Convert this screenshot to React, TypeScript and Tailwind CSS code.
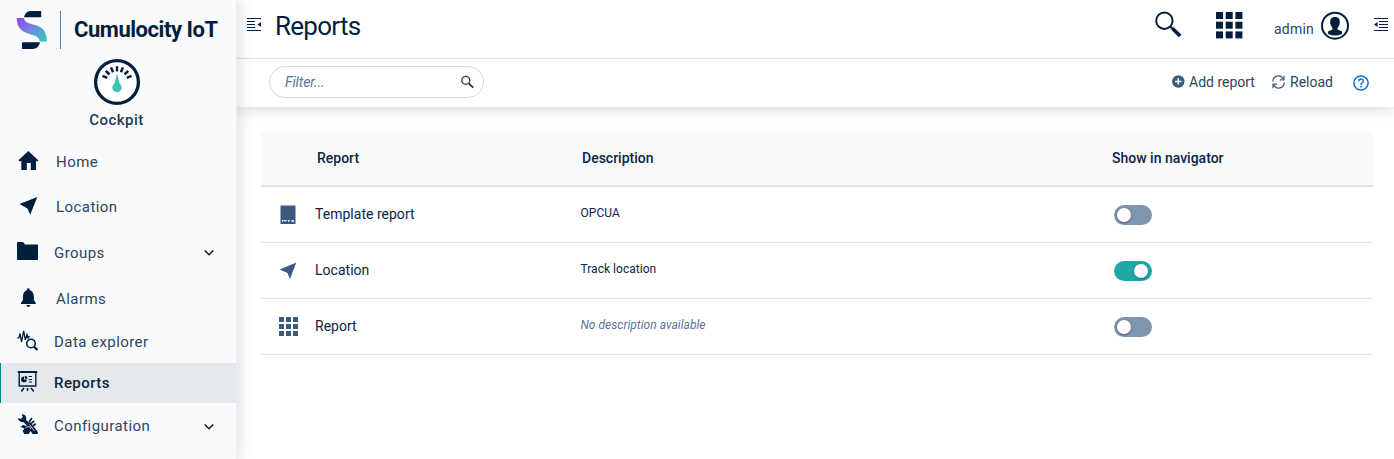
import React from "react";

type Kids = { children: React.ReactNode };

function Glyph({ w = 22, h = 22, className = "", children }: Kids & { w?: number; h?: number; className?: string }) {
  return (
    <svg width={w} height={h} viewBox={`0 0 ${w} ${h}`} fill="currentColor" className={`shrink-0 ${className}`}>
      {children}
    </svg>
  );
}

function Logo() {
  return (
    <Glyph w={32} h={40}>
      <defs>
        <linearGradient id="brand" x1="0" y1="0" x2="1" y2="1">
          <stop offset="0.1" stopColor="#8a4df5" />
          <stop offset="0.5" stopColor="#6c8be0" />
          <stop offset="0.9" stopColor="#3cc2b4" />
        </linearGradient>
      </defs>
      <path d="M8 7.2C9 3 11.500 1 15 1H25.200V7.200Z" fill="#011f3d" />
      <path d="M6 39V32.300H24C23 36.500 20.500 39 16.500 39Z" fill="#011f3d" />
      <path d="M.7 8H8C8.300 11 10 12.500 14.500 13.700L20 15.200C27 17.200 30.800 22 31 31.500H23.800C23.500 28 21 26.300 16.500 25L11.500 23.300C4 20.800 1 16 .7 8Z" fill="url(#brand)" />
    </Glyph>
  );
}

function Gauge() {
  const ticks = [-67, -45, -22, 0, 22, 45, 67];
  return (
    <Glyph w={48} h={48}>
      <circle cx="24" cy="24" r="21.400" fill="#fff" stroke="#011f3d" strokeWidth="3.300" />
      {ticks.map((a) => (
        <path key={a} d="M24 8.200V13.400" stroke="#011f3d" strokeWidth="2.500" transform={`rotate(${a} 24 24)`} />
      ))}
      <path d="M24 15.500L26.500 25.500A4.700 4.700 0 1 1 21.500 25.500Z" fill="#3cc2b4" />
    </Glyph>
  );
}

const HomeIcon = () => <Glyph><path d="M11.300 1L21.500 10.500L20.300 11.500L19 10.700V20H13.800V13H9.800V20H4.300V10.700L2.600 11.500L1.500 10.300Z" /></Glyph>;
const PointerIcon = () => <Glyph><path d="M2.500 8L20.300 1L13.200 18.800L10.500 12.500Z" /></Glyph>;
const FolderIcon = () => <Glyph><path d="M0 2Q0 1 1 1H6L8 3.500H20.200Q21 3.500 21 4.500V18.300Q21 19 20 19H1Q0 19 0 18Z" /></Glyph>;
const BellIcon = () => (
  <Glyph>
    <path d="M10 3V1.800Q11.300.700 12.600 1.800V3Q16.800 4.500 16.900 9.500V13L18.800 16V17H4V16L5.900 13V9.500Q6 4.500 10 3ZM9.200 18H13.500Q12.800 20 11.300 20Q9.800 20 9.200 18Z" />
  </Glyph>
);
const ExplorerIcon = () => (
  <Glyph className="-translate-y-px">
    <path d="M.3 7.800H1.800L3 3.500L4.500 12L6.700.8L8.300 10L10 4.500L11 8L12.500 6" fill="none" stroke="currentColor" strokeWidth="1.300" />
    <circle cx="14" cy="13.500" r="4.300" fill="none" stroke="currentColor" strokeWidth="1.600" />
    <path d="M16.800 16.500L20.500 20" stroke="currentColor" strokeWidth="2.200" />
  </Glyph>
);
const BoardIcon = () => (
  <Glyph className="-translate-y-px">
    <path d="M.8 0H20.200V2H.8Z" />
    <path d="M2.200 1.500V15H18.800V1.500" fill="none" stroke="currentColor" strokeWidth="1.400" />
    <path d="M7 5.500A2.900 2.900 0 1 0 9.900 8.400H7ZM7.800 4.800V7.700H10.500A2.900 2.900 0 0 0 7.800 4.800Z" />
    <path d="M11.700 5.500H15M11.700 8.500H15M11.700 11H15" stroke="currentColor" strokeWidth="1" />
    <path d="M7 17L4.300 20.500M10.500 17V19.800M14 17L16.700 20.500" fill="none" stroke="currentColor" strokeWidth="1.600" />
  </Glyph>
);
const ToolsIcon = () => (
  <Glyph className="-translate-y-px">
    <path d="M4.500.300Q8-.2 9.200 3V6L12.300 9L9.800 11.500L6.700 8.300Q2.500 8.700.6 4.200L4 4.800L5.800 2.800Z" />
    <path d="M12 8L15 4M14 9.700L17.300 6.800M16 11.800L18.800 9.700" fill="none" stroke="currentColor" strokeWidth="1.700" />
    <path d="M10.500 10L13 8L18.200 14.500L20.800 18V20H15.500L13.800 17L11.500 20H7.500L5.500 17L7.500 14.500L3.500 13L6 11L9.500 12Z" />
    <path d="M8.500 13.300L12.500 12.500L14 15M12.500 10.500L17.500 17" fill="none" stroke="#f9fafc" strokeWidth=".8" />
  </Glyph>
);

function Chevron() {
  return (
    <Glyph w={12} h={8} className="ml-auto mr-[21px] translate-y-px text-[#011f3d]">
      <path d="M1.700 1.500L6 5.700L10.300 1.500" fill="none" stroke="currentColor" strokeWidth="1.600" />
    </Glyph>
  );
}

function NavItem({ icon, label, box, text = "pl-[17px]", active, more }: { icon: React.ReactNode; label: string; box: string; text?: string; active?: boolean; more?: boolean }) {
  return (
    <a className={`flex w-full items-center border-l ${box} ${active ? "border-[#008a92] bg-[#e6e9eb] font-medium text-[#0b2545]" : "border-transparent text-[#2c4560]"}`}>
      <span className="ml-4 text-[#011f3d]">{icon}</span>
      <span className={`text-[15px] leading-5 tracking-[0.44px] ${text}`}>{label}</span>
      {more && <Chevron />}
    </a>
  );
}

function Sidebar() {
  return (
    <aside className="z-10 flex h-full w-[237px] shrink-0 flex-col border-r border-[#eceef2] bg-[#f9fafc] shadow-[2px_0_14px_rgba(1,31,61,0.16)]">
      <div className="flex h-[58px] shrink-0 pt-[10px] pl-4">
        <Logo />
        <div className="ml-3 mt-px h-[38px] w-px bg-[#5b7ba0]" />
        <div className="ml-[13px] mt-[5px] whitespace-nowrap text-[22px] font-bold leading-[30px] tracking-[-0.46px] text-[#011f3d]">Cumulocity IoT</div>
      </div>
      <div className="flex h-[80px] shrink-0 flex-col items-center pr-[3px]">
        <Gauge />
        <div className="mt-1 text-[15px] font-medium leading-5 tracking-[0.44px] text-[#1f3b59]">Cockpit</div>
      </div>
      <nav className="flex flex-col">
        <NavItem icon={<HomeIcon />} label="Home" box="h-[46px]" text="pl-[17px] pt-px" />
        <NavItem icon={<PointerIcon />} label="Location" box="h-[45px]" />
        <NavItem icon={<FolderIcon />} label="Groups" box="h-[46px]" text="pl-[15px] pt-px" more />
        <NavItem icon={<BellIcon />} label="Alarms" box="h-[46px]" text="pl-[17px] pt-px" />
        <NavItem icon={<ExplorerIcon />} label="Data explorer" box="h-[42px]" text="pl-[15px]" />
        <NavItem icon={<BoardIcon />} label="Reports" box="h-10" text="pl-[15px]" active />
        <NavItem icon={<ToolsIcon />} label="Configuration" box="h-[46px]" text="pl-[15px]" more />
      </nav>
    </aside>
  );
}

function MenuToggle({ right, className }: { right?: boolean; className: string }) {
  return (
    <Glyph w={14} h={15} className={className}>
      {right ? (
        <path d="M0 1H14V2H0ZM5 4H14V5H5ZM5 7H14V8H5ZM5 10H14V11H5ZM0 13H14V14H0ZM3.500 5V10L0 7.500Z" />
      ) : (
        <path d="M0 1H14V2H0ZM0 4H8V5H0ZM0 7H8V8H0ZM0 10H8V11H0ZM0 13H14V14H0ZM14 5V10L10.500 7.500Z" />
      )}
    </Glyph>
  );
}

function SquareGrid({ size, cell, step, className = "" }: { size: number; cell: number; step: number; className?: string }) {
  return (
    <Glyph w={size} h={size} className={className}>
      {[0, 1, 2].flatMap((r) => [0, 1, 2].map((c) => <rect key={`${r}${c}`} x={c * step} y={r * step} width={cell} height={cell} />))}
    </Glyph>
  );
}

function Header() {
  return (
    <header className="relative z-[1] flex h-[59px] shrink-0 border-b border-[#dfe2e8] bg-white text-[#011f3d]">
      <MenuToggle className="ml-[10px] mt-[17px]" />
      <h1 className="ml-[14px] mt-[10px] text-[26px] leading-8 tracking-[-0.75px]">Reports</h1>
      <Glyph w={28} h={28} className="ml-auto mt-[11px]">
        <circle cx="9.400" cy="9.700" r="8.200" fill="none" stroke="currentColor" strokeWidth="2" />
        <path d="M15.300 15.500L18 18" stroke="currentColor" strokeWidth="2.300" />
        <path d="M17.500 17.500L25.200 25" stroke="currentColor" strokeWidth="3.800" />
      </Glyph>
      <SquareGrid size={27} cell={7} step={9.7} className="ml-[33px] mt-3" />
      <span className="ml-[31.500px] mt-[19px] w-10 whitespace-nowrap text-[14px] leading-5 tracking-[0.2px] text-[#2c4560]">admin</span>
      <Glyph w={30} h={30} className="ml-[6px] mt-[11px]">
        <circle cx="15" cy="14.700" r="13" fill="none" stroke="currentColor" strokeWidth="2" />
        <path d="M10.200 11.500C10 7.500 12 6 15 6C18 6 20 7.500 19.800 11.500C19.700 14 18.700 15.300 17.500 17V18.500L22 20.500V23Q15 26 8 23V20.500L12.500 18.500V17C11.300 15.300 10.300 14 10.200 11.500Z" />
      </Glyph>
      <MenuToggle right className="ml-6 mr-[6px] mt-[17px]" />
    </header>
  );
}

function Toolbar() {
  return (
    <div className="flex h-[48px] shrink-0 items-start bg-white text-[14px] text-[#2c4560] shadow-[0_2px_14px_rgba(1,31,61,0.18)]">
      <div className="ml-8 mt-[7px] flex h-8 w-[215px] items-center rounded-full border border-[#d3d9e1] pl-[15px] pr-[9px]">
        <span className="italic leading-5 tracking-[-0.1px] text-[#587596]">Filter...</span>
        <Glyph w={14} h={14} className="ml-auto text-[#1f3b59]">
          <circle cx="5.800" cy="5.300" r="4" fill="none" stroke="currentColor" strokeWidth="1.300" />
          <path d="M8.800 8.300L13.200 12.700" stroke="currentColor" strokeWidth="1.900" />
        </Glyph>
      </div>
      <div className="ml-auto mt-[13px] flex h-5 items-center">
        <Glyph w={13} h={13} className="-translate-y-px text-[#3a5a80]">
          <circle cx="6.300" cy="6.500" r="6.200" />
          <path d="M6.300 3.300V9.700M3.100 6.500H9.500" stroke="#fff" strokeWidth="1.500" />
        </Glyph>
        <span className="ml-[4px] w-[67px] whitespace-nowrap leading-5">Add report</span>
      </div>
      <div className="ml-4 mt-[13px] flex h-5 items-center">
        <Glyph w={14} h={14} className="-translate-x-[0.500px] text-[#3a5a80]">
          <path d="M1.300 6.500A5.500 5.500 0 0 1 11.700 4M12.700 7.500A5.500 5.500 0 0 1 2.300 10M12.500.800V4.800H8.500M1.500 13.200V9.200H5.500" fill="none" stroke="currentColor" strokeWidth="1.200" />
        </Glyph>
        <span className="ml-[4px] w-[43px] whitespace-nowrap leading-5">Reload</span>
      </div>
      <Glyph w={16} h={16} className="ml-5 mr-[25px] mt-[16px] text-[#0c6fd6]">
        <circle cx="8" cy="8" r="7.100" fill="none" stroke="currentColor" strokeWidth="1.500" />
        <path d="M5.700 6.300C5.700 3.200 10.300 3.300 10.300 6.100C10.300 7.700 8 8 8 10" fill="none" stroke="currentColor" strokeWidth="1.400" />
        <rect x="7.250" y="11" width="1.500" height="1.500" />
      </Glyph>
    </div>
  );
}

function Toggle({ on }: { on?: boolean }) {
  return (
    <span className={`flex h-5 w-[38px] items-center rounded-full px-[3px] ${on ? "justify-end bg-[#22a6aa]" : "bg-[#8096b0]"}`}>
      <span className={`size-[14px] rounded-full bg-white shadow-[0_1px_3px_rgba(1,31,61,0.4)] ${on ? "mr-px" : ""}`} />
    </span>
  );
}

function Row({ icon, name, desc, empty, on }: { icon: React.ReactNode; name: string; desc: string; empty?: boolean; on?: boolean }) {
  return (
    <div className="flex h-14 items-center border-b border-[#dfe2e8]">
      <span className="ml-[17px] flex w-[37px] text-[#3a5a80]">{icon}</span>
      <span className="w-[265px] pb-[2px] text-[14px] leading-5 tracking-[0.02px] text-[#0b2545]">{name}</span>
      <span className={`-mt-1 w-[534px] pl-[0.500px] text-[12px] leading-4 tracking-[0.03px] ${empty ? "italic text-[#587596]" : "text-[#0b2545]"}`}>{desc}</span>
      <Toggle on={on} />
    </div>
  );
}

function ReportTable() {
  return (
    <section className="ml-6 mr-[21px] mt-6">
      <div className="relative z-[1] flex h-14 items-center border-b-2 border-[#dfe2e8] bg-[#f9fafc] text-[14px] font-medium leading-5 text-[#0b2545]">
        <span className="ml-14 w-[265px]">Report</span>
        <span className="w-[530px]">Description</span>
        <span>Show in navigator</span>
      </div>
      <Row
        name="Template report"
        desc="OPCUA"
        icon={
          <Glyph w={20} h={20}>
            <rect x="2.500" y=".5" width="15" height="18.500" rx=".5" />
            <path d="M4 15.500H9M10 15.500H12M13.500 15.500H16M4 16.500H5M6.500 16.500H7.500M10 16.500H11M13.500 16.500H16" stroke="#d8dfe8" strokeWidth="1" />
          </Glyph>
        }
      />
      <Row name="Location" desc="Track location" on icon={<Glyph w={20} h={20}><path d="M1.700 8.400L18.300 1.500L12 18L9.400 12Z" /></Glyph>} />
      <Row name="Report" desc="No description available" empty icon={<SquareGrid size={20} cell={5} step={7} className="ml-[0.500px]" />} />
    </section>
  );
}

export default function App() {
  return (
    <div className="flex h-[459px] w-[1394px] overflow-hidden bg-white font-['Roboto',sans-serif]">
      <Sidebar />
      <main className="flex min-w-0 flex-1 flex-col">
        <Header />
        <Toolbar />
        <ReportTable />
      </main>
    </div>
  );
}
